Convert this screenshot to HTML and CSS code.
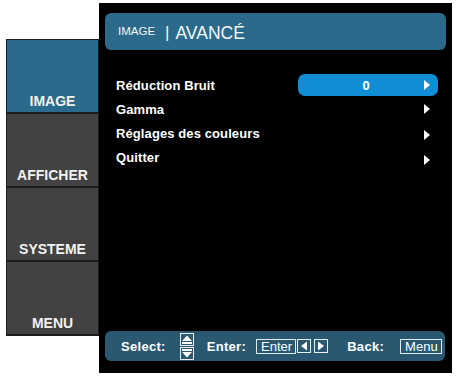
FILE: index.html
```html
<!DOCTYPE html>
<html lang="fr">
<head>
<meta charset="utf-8">
<title>Image | Avancé</title>
<link rel="stylesheet" href="styles.css">
</head>
<body>
<div class="osd">
  <nav class="tabs">
    <div class="tab active">IMAGE</div>
    <div class="tab">AFFICHER</div>
    <div class="tab">SYSTEME</div>
    <div class="tab">MENU</div>
  </nav>
  <main class="panel">
    <header class="title">
      <span class="crumb">IMAGE</span>
      <span class="sep">|</span>
      <span class="page">AVANCÉ</span>
    </header>
    <ul class="items">
      <li class="item">
        <span class="label">Réduction Bruit</span>
        <span class="value selected"><span class="num">0</span><span class="arrow"></span></span>
      </li>
      <li class="item">
        <span class="label">Gamma</span>
        <span class="value"><span class="num"></span><span class="arrow"></span></span>
      </li>
      <li class="item">
        <span class="label">Réglages des couleurs</span>
        <span class="value low"><span class="num"></span><span class="arrow"></span></span>
      </li>
      <li class="item">
        <span class="label">Quitter</span>
        <span class="value lower"><span class="num"></span><span class="arrow"></span></span>
      </li>
    </ul>
    <footer class="help">
      <span class="key-label">Select:</span>
      <svg class="updown" width="14" height="27" viewBox="0 0 14 27">
        <rect x="0.5" y="0.5" width="13" height="12" fill="#2a5870" stroke="#e8f0f4"/>
        <polygon points="7,2.5 12,8 2,8" fill="#fff"/>
        <rect x="2" y="9" width="10" height="2" fill="#fff"/>
        <rect x="0.5" y="14.5" width="13" height="12" fill="#2a5870" stroke="#e8f0f4"/>
        <rect x="2" y="16" width="10" height="2" fill="#fff"/>
        <polygon points="2,19 12,19 7,24.5" fill="#fff"/>
      </svg>
      <span class="key-label enter-label">Enter:</span>
      <span class="keybox">Enter</span>
      <svg class="arrowbox" width="14" height="14" viewBox="0 0 14 14">
        <rect x="0.5" y="0.5" width="13" height="13" fill="#2a5870" stroke="#e8f0f4"/>
        <polygon points="10,2.5 10,11.5 4,7" fill="#fff"/>
      </svg>
      <svg class="arrowbox second" width="14" height="14" viewBox="0 0 14 14">
        <rect x="0.5" y="0.5" width="13" height="13" fill="#2a5870" stroke="#e8f0f4"/>
        <polygon points="4,2.5 4,11.5 10,7" fill="#fff"/>
      </svg>
      <span class="key-label back-label">Back:</span>
      <span class="keybox menu">Menu</span>
    </footer>
  </main>
</div>
</body>
</html>
```

FILE: styles.css
```css
* { box-sizing: border-box; }

html, body {
  margin: 0;
  padding: 0;
  background: #ffffff;
}

body {
  font-family: "Liberation Sans", Arial, sans-serif;
  color: #ffffff;
}

.osd {
  display: flex;
  align-items: flex-start;
  padding-left: 6px;
}

/* left tab column */
.tabs {
  margin-top: 39px;
  width: 93px;
  display: flex;
  flex-direction: column;
  gap: 2px;
  padding: 1px 1px 2px 1px;
  background: #1c1c1c;
}

.tab {
  height: 72px;
  background: #424242;
  display: flex;
  align-items: flex-end;
  justify-content: center;
  padding-bottom: 3px;
  font-weight: bold;
  font-size: 14px;
  line-height: 16px;
  color: #f2f2f2;
}

.tab.active {
  background: #2a6a8a;
}

/* main black panel */
.panel {
  margin-top: 3px;
  width: 353px;
  height: 370px;
  background: #000000;
  padding: 10px 6px 12px 6px;
  display: flex;
  flex-direction: column;
}

.title {
  height: 37px;
  background: #2b6a8a;
  border-radius: 6px;
  display: flex;
  align-items: flex-start;
  padding: 11px 0 0 13px;
  color: #f4f8fa;
}

.crumb {
  font-size: 11.5px;
  line-height: 14px;
}

.sep {
  font-size: 17px;
  line-height: 18px;
  margin-left: 10px;
}

.page {
  font-size: 17.5px;
  line-height: 18px;
  margin-left: 6px;
}

.items {
  list-style: none;
  margin: 23px 0 0 0;
  padding: 0;
}

.item {
  height: 24px;
  display: flex;
  align-items: center;
  justify-content: space-between;
  padding-left: 11px;
  padding-right: 8px;
  font-weight: bold;
  font-size: 13px;
}

.label {
  letter-spacing: 0.1px;
}

.value {
  width: 140px;
  height: 22px;
  border-radius: 7px;
  display: flex;
  align-items: center;
  padding-right: 8px;
}

.value.selected {
  background: #0f8ed6;
}

.value.low {
  padding-top: 3px;
}

.value.lower {
  padding-top: 5px;
}

.num {
  flex: 1;
  text-align: center;
  font-size: 13px;
  padding-left: 10px;
}

.arrow {
  width: 0;
  height: 0;
  border-top: 5.5px solid transparent;
  border-bottom: 5.5px solid transparent;
  border-left: 6px solid #ffffff;
}

/* footer help bar */
.help {
  margin-top: auto;
  height: 30px;
  width: 340px;
  background: #2a5870;
  border-radius: 6px;
  display: flex;
  align-items: center;
  padding-left: 16px;
  font-size: 13px;
}

.key-label {
  font-weight: bold;
  letter-spacing: 0.3px;
}

.updown {
  margin-left: 14px;
  display: block;
}

.enter-label {
  margin-left: 13px;
}

.keybox {
  margin-left: 10px;
  height: 15px;
  border: 1px solid #e0ecf2;
  padding: 0 3px 0 4px;
  font-size: 13px;
  line-height: 13px;
  display: flex;
  align-items: center;
}

.arrowbox {
  display: block;
  margin-left: 1px;
}

.arrowbox.second {
  margin-left: 3px;
}

.back-label {
  margin-left: 19px;
}

.keybox.menu {
  margin-left: 16px;
}
```
